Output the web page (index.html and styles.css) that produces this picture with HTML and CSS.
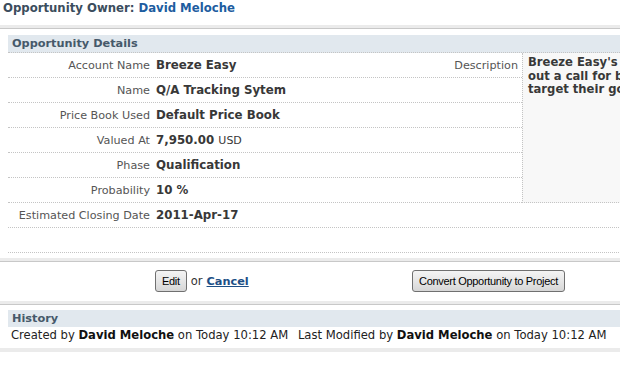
FILE: index.html
```html
<!DOCTYPE html>
<html lang="en">
    <head>
        <meta charset="utf-8" />
        <title>Opportunity</title>
        <link rel="stylesheet" href="styles.css">
    </head>
    <body>
        <h1 class="owner">Opportunity Owner: <a href="#">David Meloche</a></h1>
        <div class="band"></div>

        <section class="box">
            <h2 class="box-head">Opportunity Details</h2>
            <div class="details">
                <div class="row"><span class="lbl">Account Name</span><span class="val">Breeze Easy</span><span class="desc-lbl">Description</span></div>
                <div class="row"><span class="lbl">Name</span><span class="val">Q/A Tracking Sytem</span></div>
                <div class="row"><span class="lbl">Price Book Used</span><span class="val">Default Price Book</span></div>
                <div class="row"><span class="lbl">Valued At</span><span class="val">7,950.00 <small>USD</small></span></div>
                <div class="row"><span class="lbl">Phase</span><span class="val">Qualification</span></div>
                <div class="row"><span class="lbl">Probability</span><span class="val">10 %</span></div>
                <div class="desc">Breeze Easy's marketing team has put<br>out a call for bids on a system to help<br>target their goals for the new season.</div>
                <div class="row wide"><span class="lbl">Estimated Closing Date</span><span class="val">2011-Apr-17</span></div>
                <div class="row wide"></div>
            </div>
        </section>
        <div class="band"></div>

        <div class="actions">
            <div class="left">
                <button class="btn">Edit</button>
                <span class="or">or</span>
                <a class="cancel" href="#">Cancel</a>
            </div>
            <button class="btn">Convert Opportunity to Project</button>
        </div>
        <div class="band"></div>

        <section class="box hist">
            <h2 class="box-head">History</h2>
            <p class="history">Created by <b>David Meloche</b> on Today 10:12 AM <span class="sep"></span>Last Modified by <b>David Meloche</b> on Today 10:12 AM</p>
        </section>
        <div class="band flat"></div>
    </body>
</html>
```

FILE: styles.css
```css
* { margin: 0; padding: 0; box-sizing: border-box; }
body {
    font-family: "DejaVu Sans", Verdana, sans-serif;
    color: #383838;
    background: #fff;
    width: 720px;
    overflow: hidden;
}

.owner {
    font-size: 11.7px;
    line-height: 17px;
    color: #3b4d5d;
    padding: 0 0 0 3px;
    margin-bottom: 8px;
}
.owner a { color: #1d5da0; text-decoration: none; }

.band {
    height: 4px;
    background: #ebebeb;
    border-bottom: 1px solid #c8c8c8;
}
.band.flat { border-bottom: none; }

.box { padding: 6px 0 5px 8px; }
.box.hist { padding-top: 5px; }
.box-head {
    font-size: 11.3px;
    line-height: 17px;
    height: 18px;
    padding-left: 4px;
    color: #46596a;
    background: #e1e8ee;
    border-bottom: 1px dotted #c4c4c4;
}
.hist .box-head { height: 17px; border-bottom: none; }

.details {
    display: grid;
    grid-template-columns: 514px 1fr;
}
.row {
    grid-column: 1;
    display: grid;
    grid-template-columns: 142px auto 1fr;
    column-gap: 6px;
    align-items: center;
    height: 25px;
    border-bottom: 1px dotted #c4c4c4;
}
.row.wide { grid-column: 1 / 3; }
.lbl {
    font-size: 11.2px;
    color: #555;
    text-align: right;
}
.val {
    font-size: 11.8px;
    font-weight: bold;
    color: #383838;
}
.val small { font-size: 11px; font-weight: normal; }
.desc-lbl {
    font-size: 11.2px;
    color: #555;
    text-align: right;
    padding-right: 4px;
}
.desc {
    grid-column: 2;
    grid-row: 1 / 7;
    background: #f8f8f8;
    border-left: 1px dotted #c4c4c4;
    border-bottom: 1px dotted #c4c4c4;
    padding: 3px 0 0 5px;
    font-size: 11.6px;
    line-height: 13.5px;
    font-weight: bold;
    white-space: nowrap;
    color: #383838;
}

.actions {
    display: flex;
    align-items: center;
    padding: 8px 0 9px 155px;
}
.left { display: flex; align-items: center; gap: 4px; width: 257px; }
.btn {
    font-family: "Liberation Sans", Arial, sans-serif;
    font-size: 11px;
    letter-spacing: -0.3px;
    height: 22px;
    padding: 0 6px;
    color: #000;
    border: 1px solid #707070;
    border-radius: 3px;
    background: linear-gradient(#f4f4f4, #e6e6e6 50%, #d6d6d6);
}
.or { font-size: 11.5px; color: #333; }
.cancel {
    font-size: 11.3px;
    font-weight: bold;
    color: #1d4f86;
}

.history {
    font-size: 11.6px;
    line-height: 15px;
    color: #222;
    padding: 1px 0 0 3px;
}
.history b { color: #111; }
.sep { display: inline-block; width: 6px; }
```
